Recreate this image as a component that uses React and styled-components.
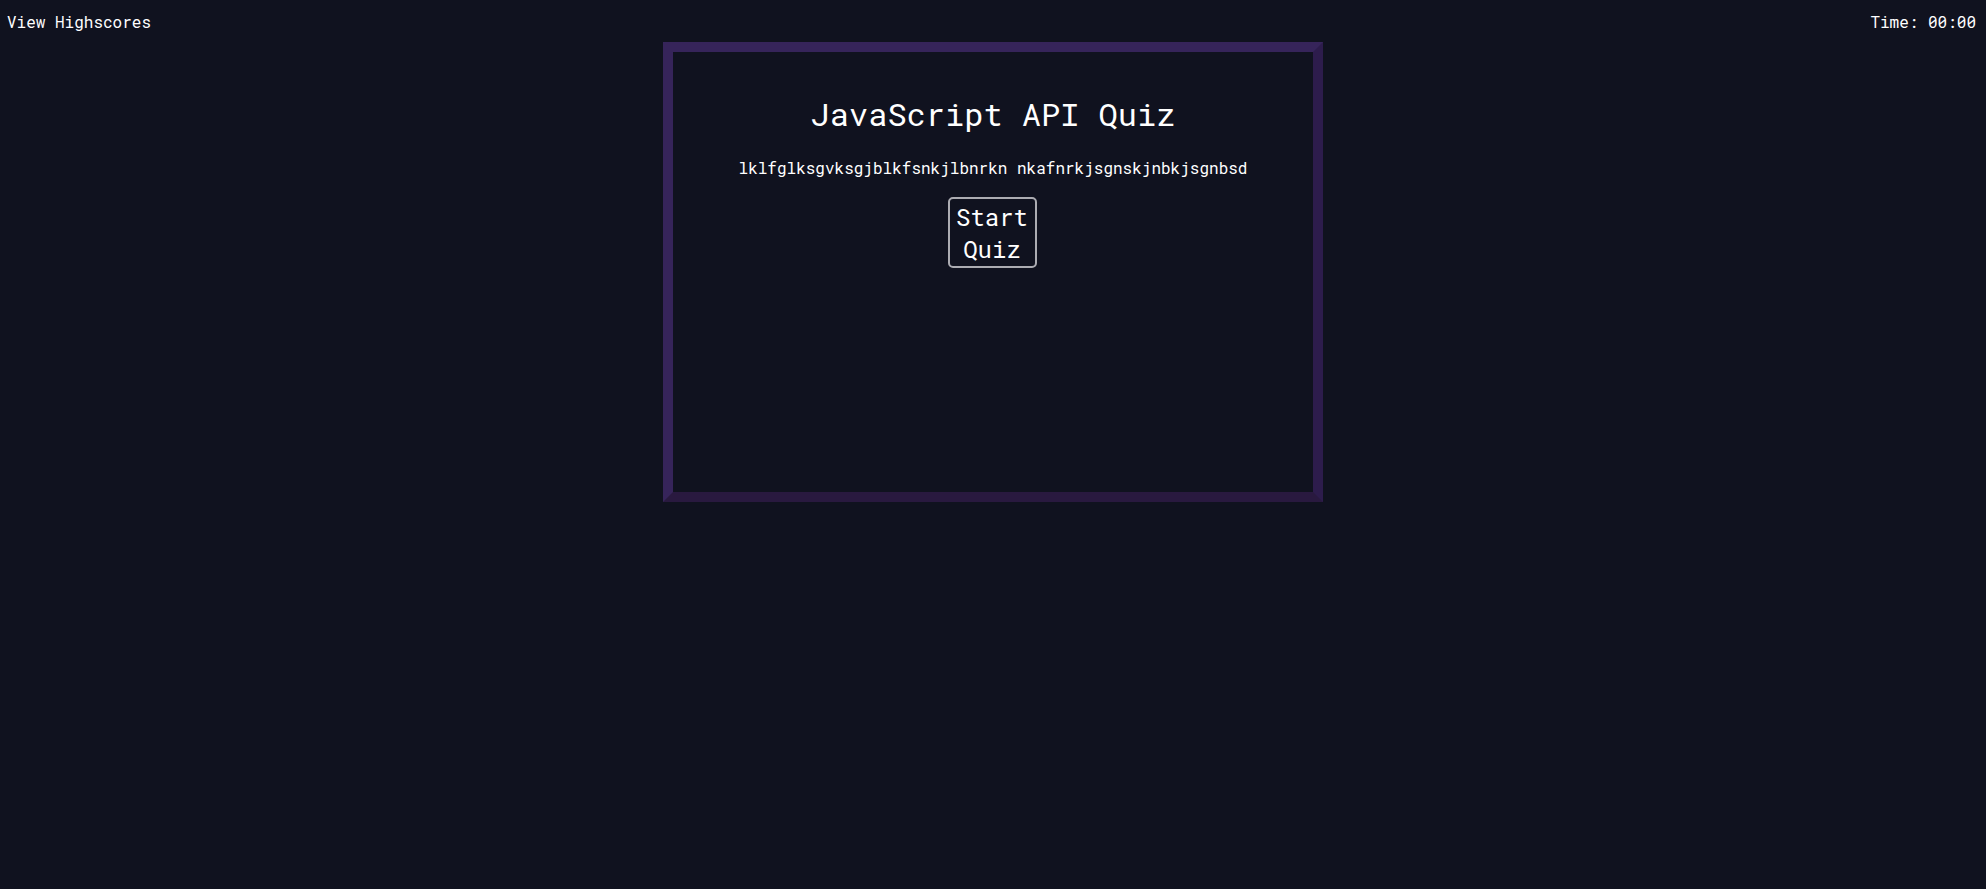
import React from 'react';
import styled, { createGlobalStyle } from 'styled-components';

const GlobalStyle = createGlobalStyle`
  html, body {
    margin: 0;
    padding: 0;
    background: #10121f;
    color: #ffffff;
    font-family: "Roboto Mono", "Liberation Mono", "DejaVu Sans Mono", monospace;
  }
  #root {
    min-height: 889px;
  }
`;

const Header = styled.header`
  display: flex;
  justify-content: space-between;
  align-items: center;
  height: 42px;
  padding: 0 10px 0 7px;
  font-size: 16px;
`;

const HeaderLink = styled.a`
  color: #ffffff;
  text-decoration: none;
  cursor: pointer;
`;

const Timer = styled.div`
  color: #ffffff;
`;

const QuizBox = styled.main`
  box-sizing: border-box;
  width: 660px;
  height: 460px;
  margin: 0 auto;
  border: 10px solid;
  border-color: #36245a #2d1c4c #29193f #36245a;
  display: flex;
  flex-direction: column;
  align-items: center;
`;

const Title = styled.h1`
  margin: 43px 0 0;
  font-size: 32px;
  line-height: 38px;
  font-weight: 400;
`;

const Intro = styled.p`
  margin: 25px 0 0;
  font-size: 16px;
  line-height: 20px;
`;

const StartButton = styled.button`
  box-sizing: border-box;
  margin: 19px 2px 0 0;
  width: 89px;
  height: 71px;
  padding: 1px 6px;
  background: transparent;
  color: #ffffff;
  border: 2px solid #acacb2;
  border-radius: 5px;
  font-family: inherit;
  font-size: 24px;
  line-height: 32px;
  cursor: pointer;
`;

const App = () => {
  return (
    <>
      <GlobalStyle />
      <Header>
        <HeaderLink>View Highscores</HeaderLink>
        <Timer>Time: 00:00</Timer>
      </Header>
      <QuizBox>
        <Title>JavaScript API Quiz</Title>
        <Intro>lklfglksgvksgjblkfsnkjlbnrkn nkafnrkjsgnskjnbkjsgnbsd</Intro>
        <StartButton>Start Quiz</StartButton>
      </QuizBox>
    </>
  );
};

export default App;
